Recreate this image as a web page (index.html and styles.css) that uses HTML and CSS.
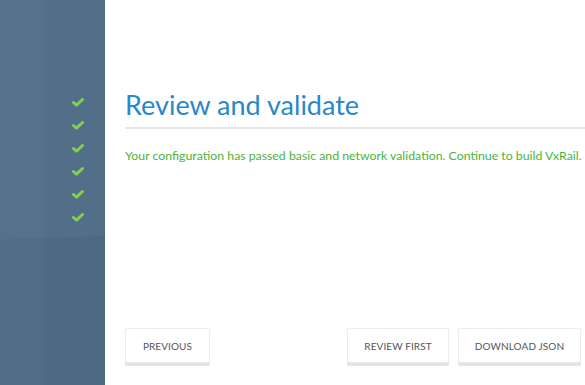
FILE: index.html
```html
<!DOCTYPE html>
<html lang="en">
<head>
    <meta charset="UTF-8">
    <meta name="viewport" content="width=device-width, initial-scale=1.0">
    <title>Review and validate</title>
    <link rel="stylesheet" href="styles.css">
</head>
<body>
    <div class="sidebar">
        <ul class="steps">
            <li><svg viewBox="0 0 12 9"><polyline points="1.5,4.5 4.5,7.2 10.5,1.5"/></svg></li>
            <li><svg viewBox="0 0 12 9"><polyline points="1.5,4.5 4.5,7.2 10.5,1.5"/></svg></li>
            <li><svg viewBox="0 0 12 9"><polyline points="1.5,4.5 4.5,7.2 10.5,1.5"/></svg></li>
            <li><svg viewBox="0 0 12 9"><polyline points="1.5,4.5 4.5,7.2 10.5,1.5"/></svg></li>
            <li><svg viewBox="0 0 12 9"><polyline points="1.5,4.5 4.5,7.2 10.5,1.5"/></svg></li>
            <li><svg viewBox="0 0 12 9"><polyline points="1.5,4.5 4.5,7.2 10.5,1.5"/></svg></li>
        </ul>
    </div>

    <div class="main">
        <h1 class="title">Review and validate</h1>
        <p class="status">Your configuration has passed basic and network validation. Continue to build VxRail.</p>

        <div class="actions">
            <button class="btn">PREVIOUS</button>
            <div class="spacer"></div>
            <button class="btn btn-review">REVIEW FIRST</button>
            <button class="btn btn-json">DOWNLOAD JSON</button>
        </div>
    </div>
</body>
</html>
```

FILE: styles.css
```css
html, body {
    height: 100%;
}

body {
    margin: 0;
    display: flex;
    font-family: Lato, "Open Sans", sans-serif;
    background: #fff;
    overflow: hidden;
}

/* Sidebar */
.sidebar {
    width: 105px;
    flex-shrink: 0;
    background:
        linear-gradient(178deg, rgba(255, 255, 255, 0.035) 0%, rgba(255, 255, 255, 0.035) 61.5%, rgba(0, 0, 0, 0) 61.8%),
        linear-gradient(to right, rgba(255, 255, 255, 0.02) 0%, rgba(255, 255, 255, 0.02) 42%, rgba(0, 0, 0, 0) 42.5%),
        #4d6984;
}

.steps {
    list-style: none;
    margin: 0;
    padding: 92px 0 0 72px;
    display: flex;
    flex-direction: column;
    gap: 12px;
}

.steps li {
    height: 11px;
}

.steps svg {
    width: 12px;
    height: 11px;
    fill: none;
    stroke: #83d04c;
    stroke-width: 3;
    stroke-linecap: round;
    stroke-linejoin: round;
}

/* Main */
.main {
    flex: 1;
    display: flex;
    flex-direction: column;
    padding: 0 4px 22px 20px;
    min-width: 0;
}

.title {
    margin: 89px -4px 0 0;
    padding-bottom: 6px;
    font-size: 27px;
    font-weight: 400;
    color: #2a87c9;
    border-bottom: 2px solid #e6e6e6;
    line-height: 32px;
}

.status {
    margin: 19px 0 0;
    font-size: 12.3px;
    color: #4cb338;
    white-space: nowrap;
}

.actions {
    margin-top: auto;
    display: flex;
    gap: 9px;
}

.spacer {
    flex: 1;
}

.btn {
    height: 35px;
    padding: 0;
    font-family: Lato, "Open Sans", sans-serif;
    font-size: 10px;
    letter-spacing: 0.1px;
    color: #555;
    background: #fff;
    border: 1px solid #ececec;
    border-radius: 2px;
    box-shadow: 0 3px 0 #e4e4e4;
    cursor: pointer;
}

.btn:first-child {
    width: 85px;
}

.btn-review {
    width: 102px;
}

.btn-json {
    width: 123px;
}
```
